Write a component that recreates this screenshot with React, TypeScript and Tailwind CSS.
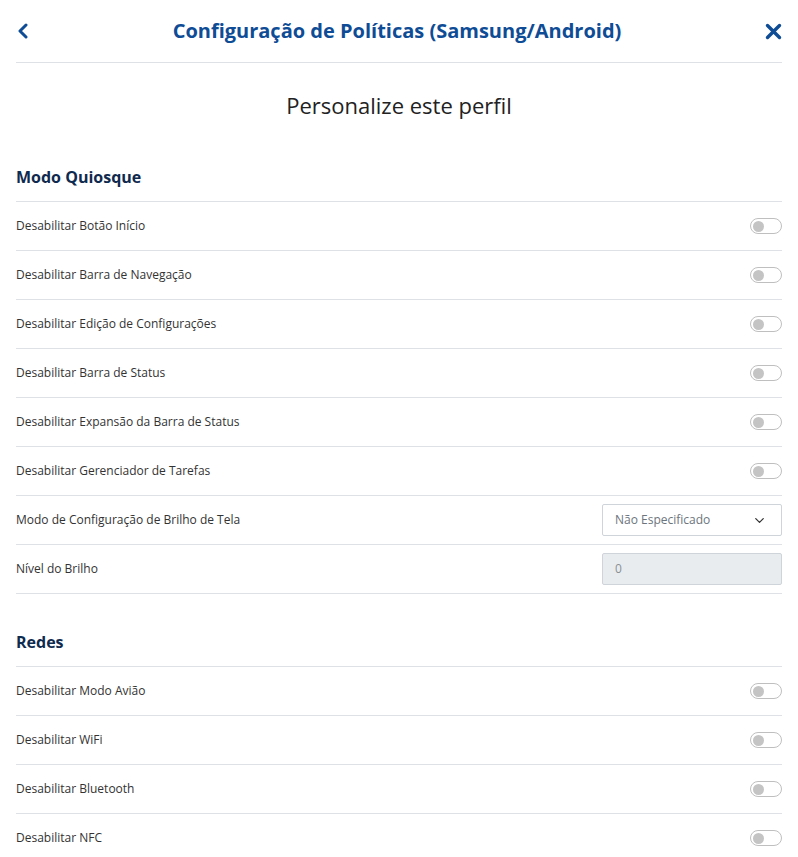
import { ChevronDown } from 'lucide-react';

const kiosk = [
  'Desabilitar Botão Início',
  'Desabilitar Barra de Navegação',
  'Desabilitar Edição de Configurações',
  'Desabilitar Barra de Status',
  'Desabilitar Expansão da Barra de Status',
  'Desabilitar Gerenciador de Tarefas',
];

const networks = ['Desabilitar Modo Avião', 'Desabilitar WiFi', 'Desabilitar Bluetooth', 'Desabilitar NFC'];

function Toggle() {
  return (
    <div className="w-[32px] h-[16px] rounded-full border border-[#bfbfbf] bg-white flex items-center px-[2px]">
      <div className="w-[11px] h-[11px] rounded-full bg-[#c4c4c4]" />
    </div>
  );
}

function Row({ label, children }: { label: string; children: React.ReactNode }) {
  return (
    <div className="h-[49px] border-b border-[#dee2e6] flex items-center justify-between">
      <span className="text-[12px] text-[#333]">{label}</span>
      {children}
    </div>
  );
}

function SectionTitle({ title }: { title: string }) {
  return (
    <div className="h-[49px] border-b border-[#dee2e6] flex items-center">
      <h2 className="text-[16px] font-bold text-[#0f2a4f]">{title}</h2>
    </div>
  );
}

export default function App() {
  return (
    <div className="min-h-screen bg-white px-4" style={{ fontFamily: '"Open Sans", sans-serif' }}>
      {/* Header */}
      <div className="h-[63px] border-b border-[#dee2e6] flex items-center justify-between">
        <svg width="12" height="16" viewBox="0 0 12 16" className="ml-[1px]">
          <path d="M9 2 L3 8 L9 14" fill="none" stroke="#0f4c96" strokeWidth="3" strokeLinecap="round" strokeLinejoin="round" />
        </svg>
        <h1 className="text-[20px] font-bold text-[#0f4c96]">Configuração de Políticas (Samsung/Android)</h1>
        <svg width="17" height="17" viewBox="0 0 17 17">
          <path d="M2.5 2.5 L14.5 14.5 M14.5 2.5 L2.5 14.5" fill="none" stroke="#0f4c96" strokeWidth="3.4" strokeLinecap="round" />
        </svg>
      </div>

      <div className="pt-[27px] pb-[33px] text-center">
        <p className="text-[22px] leading-[30px] text-[#222]">Personalize este perfil</p>
      </div>

      <SectionTitle title="Modo Quiosque" />
      {kiosk.map((k) => (
        <Row key={k} label={k}>
          <Toggle />
        </Row>
      ))}
      <Row label="Modo de Configuração de Brilho de Tela">
        <div className="w-[180px] h-[32px] border border-[#ced4da] rounded-[2px] flex items-center justify-between pl-[12px] pr-[14px]">
          <span className="text-[12px] text-[#6c757d]">Não Especificado</span>
          <ChevronDown size={15} strokeWidth={2} color="#333" />
        </div>
      </Row>
      <Row label="Nível do Brilho">
        <div className="w-[180px] h-[32px] border border-[#ced4da] rounded-[2px] bg-[#e9ecef] flex items-center pl-[12px]">
          <span className="text-[12px] text-[#8a8f94]">0</span>
        </div>
      </Row>

      <div className="mt-[24px]">
        <SectionTitle title="Redes" />
        {networks.map((k) => (
          <Row key={k} label={k}>
            <Toggle />
          </Row>
        ))}
      </div>
    </div>
  );
}
